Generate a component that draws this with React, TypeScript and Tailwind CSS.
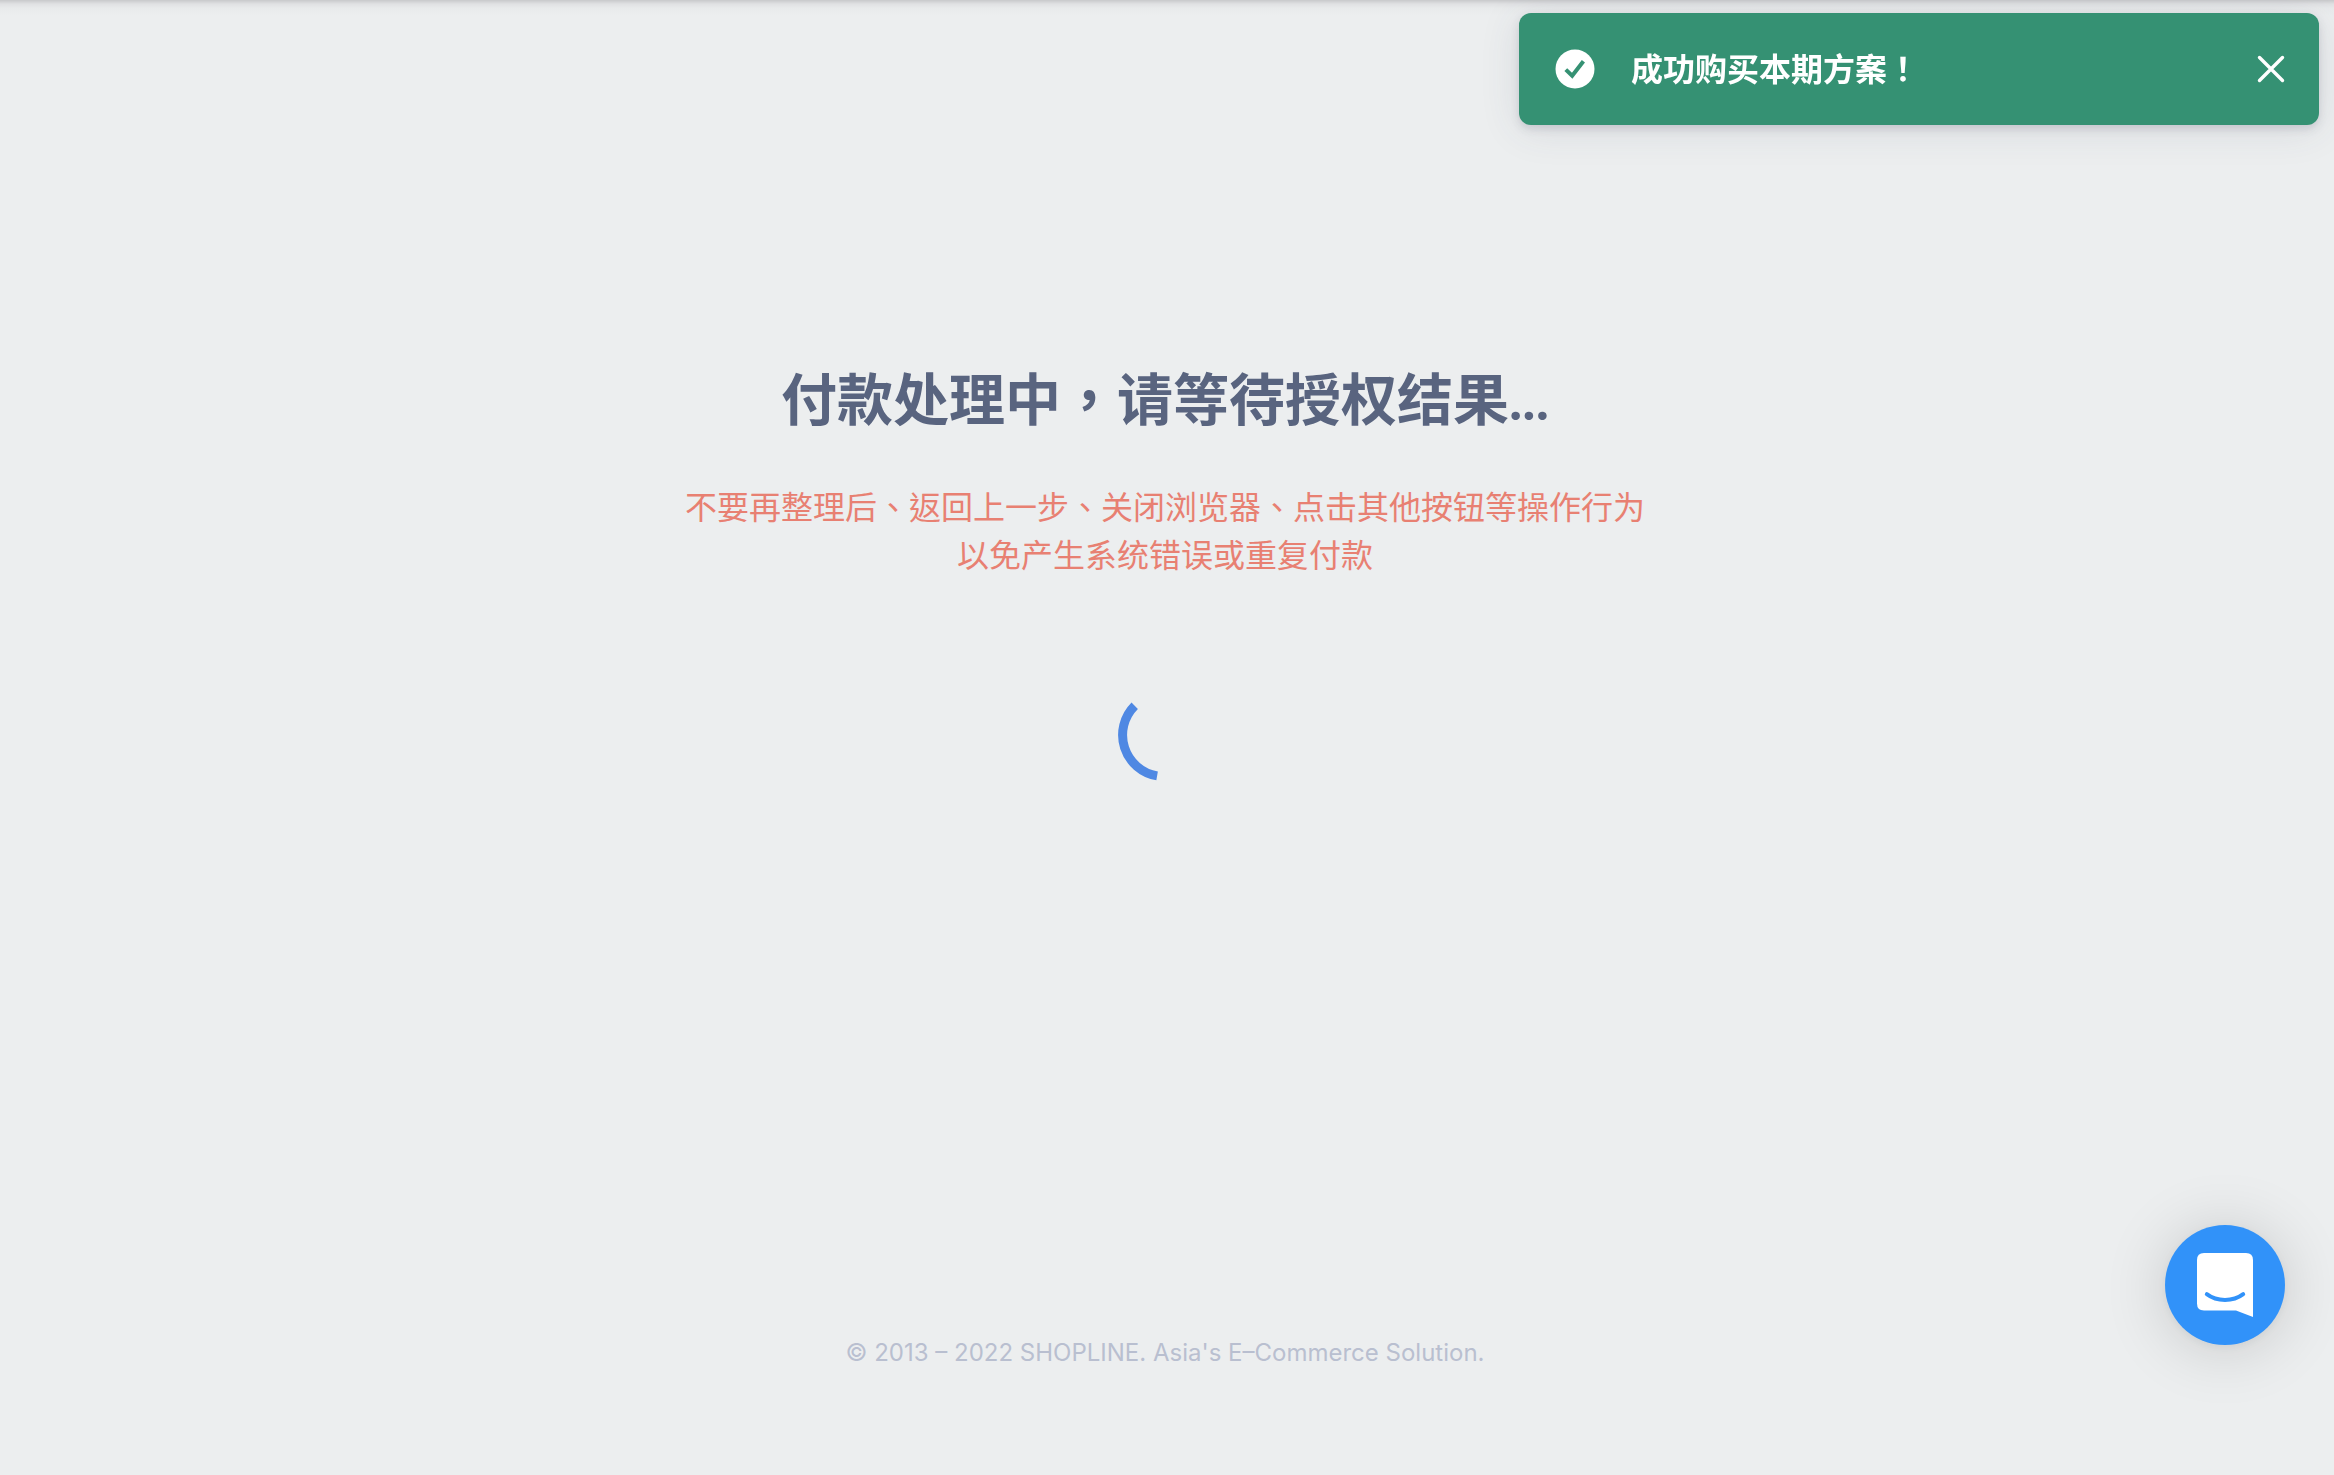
import type { ReactNode } from 'react';

function Toast({ children }: { children: ReactNode }) {
  return (
    <div
      role="status"
      className="fixed top-[13px] right-[15px] w-[800px] max-w-full h-28 pl-9 pr-8 flex items-center rounded-xl bg-[#359173] text-white shadow-[0_4px_8px_rgba(60,65,90,0.16),0_4px_40px_rgba(60,65,90,0.12)]"
    >
      <svg className="w-10 h-10 shrink-0" viewBox="0 0 40 40" fill="none" aria-hidden="true">
        <circle cx="20" cy="20" r="19.5" fill="currentColor" />
        <path d="M10.8 20.6 L17.2 26.8 L28.4 12.2" stroke="#359173" strokeWidth="4" />
      </svg>
      <p className="flex-1 ml-9 pb-1 text-left text-[32px] leading-12 font-bold">{children}</p>
      <button type="button" aria-label="关闭" className="w-8 h-8 shrink-0">
        <svg className="w-8 h-8" viewBox="0 0 32 32" fill="none" aria-hidden="true">
          <path
            d="M4.5 4.5 L27.5 27.5 M27.5 4.5 L4.5 27.5"
            stroke="currentColor"
            strokeWidth="3.4"
            strokeLinecap="round"
          />
        </svg>
      </button>
    </div>
  );
}

function Spinner() {
  return (
    <svg className="w-24 h-24" viewBox="-48 -48 96 96" fill="none" role="img" aria-label="处理中">
      <path d="M-30.3 -29.3 A41.5 41.5 0 0 0 -7.9 40.9" stroke="#4f88e3" strokeWidth="9" />
    </svg>
  );
}

function ChatLauncher() {
  return (
    <button
      type="button"
      aria-label="在线客服"
      className="fixed bottom-[130px] right-[49px] w-[120px] h-[120px] rounded-full bg-[#3192f9] shadow-[0_2px_12px_rgba(0,0,0,0.06),0_4px_64px_rgba(0,0,0,0.16)]"
    >
      <svg className="w-[120px] h-[120px]" viewBox="0 0 120 120" fill="none" aria-hidden="true">
        <path
          d="M39 28 H81 Q88 28 88 35 V92 L71 85.5 H39 Q32 85.5 32 78.5 V35 Q32 28 39 28 Z"
          fill="#fff"
        />
        <path
          d="M41.8 69.2 C52 77 68 77 78.2 69.2"
          stroke="#3192f9"
          strokeWidth="4"
          strokeLinecap="round"
        />
      </svg>
    </button>
  );
}

export default function App() {
  return (
    <div className="min-h-screen flex flex-col bg-[#eceeef] text-center font-['Noto_Sans_CJK_TC',sans-serif]">
      {/* Shadow cast by the top bar */}
      <div className="h-4 bg-[linear-gradient(#c8c9cb,#e0e1e3_4px,#e8eaeb_8px,#eceeef)]" />

      <main className="flex-1 flex flex-col items-center pt-[340px] pr-1">
        <h1 className="text-[56px] leading-20 font-bold text-[#59647f]">
          付款处理中，请等待授权结果<span className="font-['Lato',sans-serif]">...</span>
        </h1>
        <p className="mt-[42px] text-[32px] leading-12 text-[#e88072]">
          不要再整理后、返回上一步、关闭浏览器、点击其他按钮等操作行为
          <br />
          以免产生系统错误或重复付款
        </p>
        <div className="mt-[110px]">
          <Spinner />
        </div>
      </main>

      <footer className="pb-[104px] pr-1 font-['Inter',sans-serif] text-2xl leading-9 text-[#b9bfd0]">
        © 2013 – 2022 SHOPLINE. Asia's E–Commerce Solution.
      </footer>

      <Toast>成功购买本期方案！</Toast>
      <ChatLauncher />
    </div>
  );
}
